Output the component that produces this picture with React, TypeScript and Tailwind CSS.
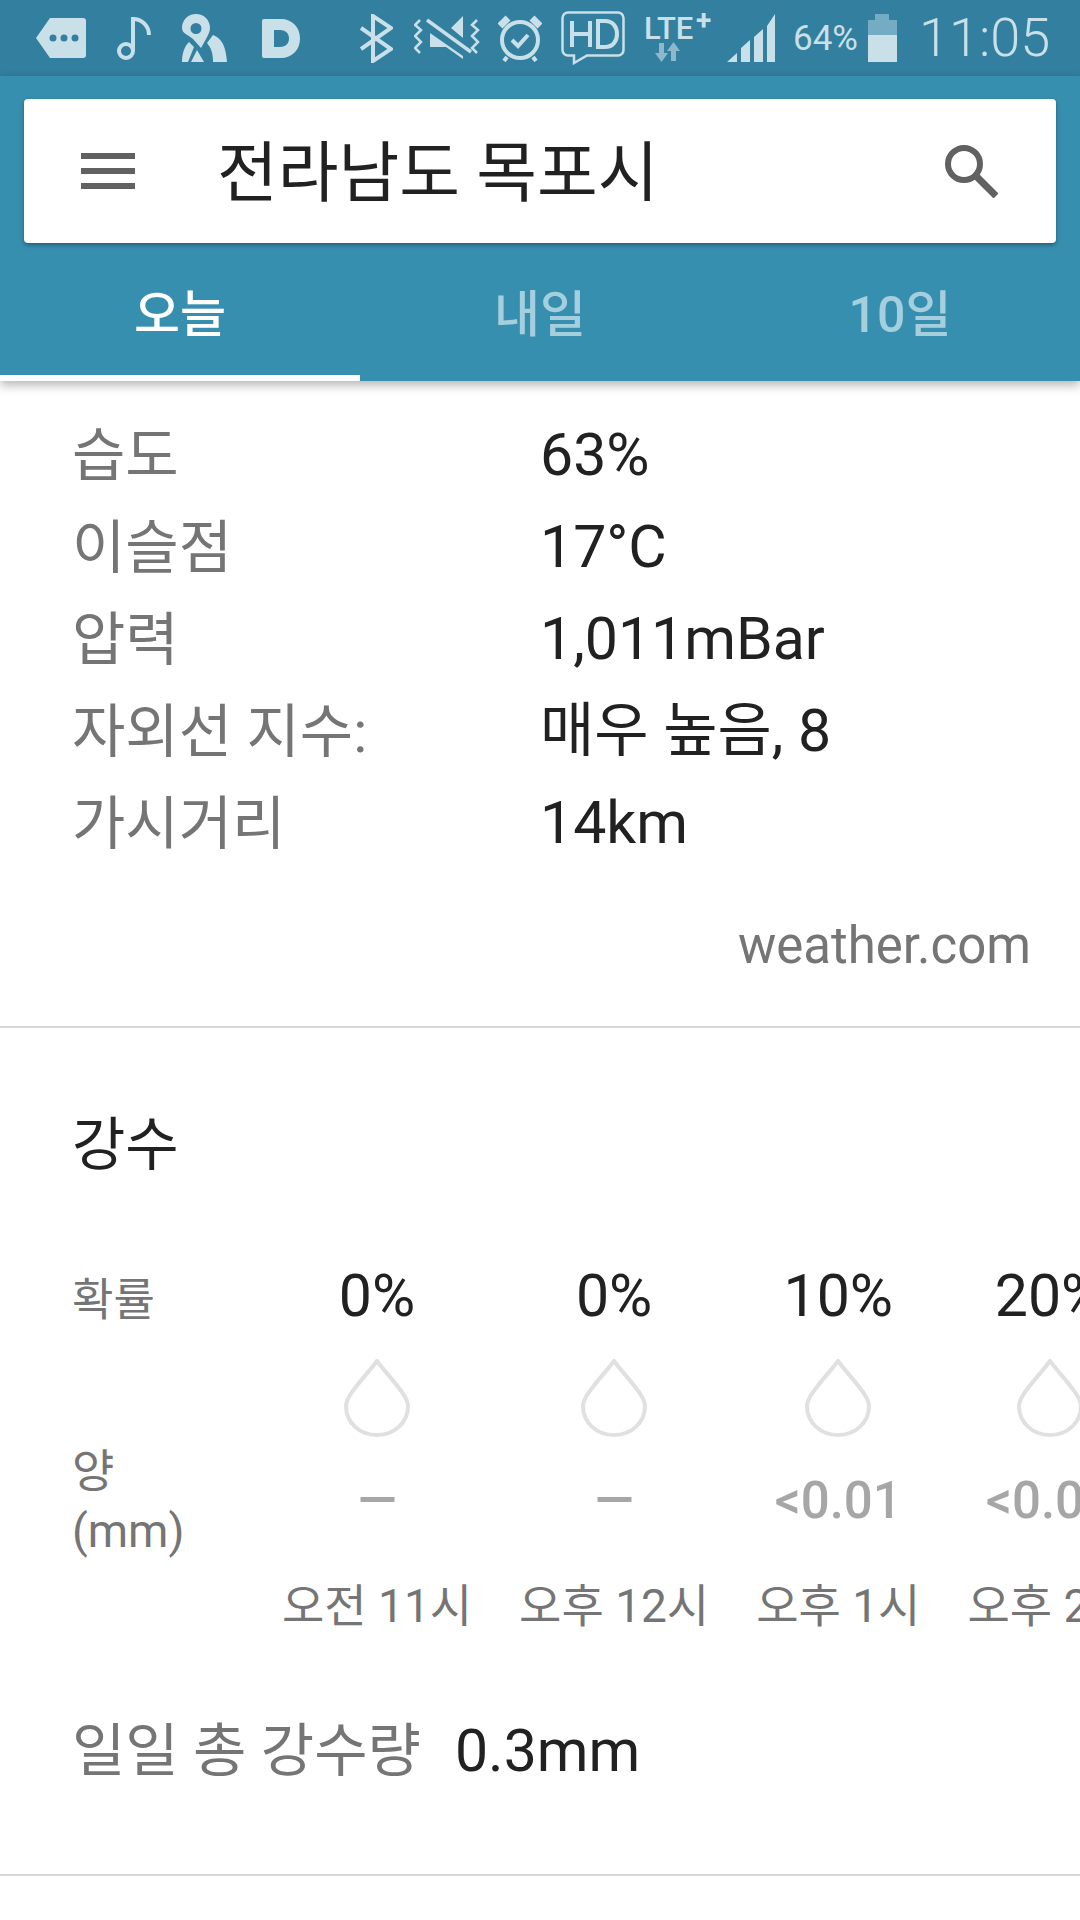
const font = { fontFamily: '"Roboto", "Noto Sans CJK KR", sans-serif' };

const details = [
  ['습도', '63%'],
  ['이슬점', '17°C'],
  ['압력', '1,011mBar'],
  ['자외선 지수:', '매우 높음, 8'],
  ['가시거리', '14km'],
];

const hours = [
  { pct: '0%', amount: '—', time: '오전 11시' },
  { pct: '0%', amount: '—', time: '오후 12시' },
  { pct: '10%', amount: '<0.01', time: '오후 1시' },
  { pct: '20%', amount: '<0.01', time: '오후 2시' },
];

function Drop() {
  return (
    <svg width="66" height="78" viewBox="0 0 66 78" fill="none" stroke="#e0e0e0" strokeWidth="4">
      <path d="M33 2C22 17 2 36 2 47c0 17 14 29 31 29s31-12 31-29C64 36 44 17 33 2Z" />
    </svg>
  );
}

function StatusIcons() {
  const c = '#c9e0e8';
  return (
    <div className="flex h-[76px] items-center bg-[#337f9f] text-[#c9e0e8]">
      <svg className="ml-[36px]" width="50" height="40" viewBox="0 0 50 40">
        <path d="M14 0h33a3 3 0 0 1 3 3v34a3 3 0 0 1-3 3H14L0 20Z" fill={c} />
        <circle cx="17" cy="20" r="3.5" fill="#337f9f" />
        <circle cx="28" cy="20" r="3.5" fill="#337f9f" />
        <circle cx="39" cy="20" r="3.5" fill="#337f9f" />
      </svg>
      <svg className="ml-[31px]" width="34" height="44" viewBox="0 0 34 44" fill="none" stroke={c} strokeWidth="4">
        <circle cx="9" cy="35" r="7" />
        <path d="M16 35V3c9 0 16 7 16 16" />
      </svg>
      <svg className="ml-[31px]" width="45" height="48" viewBox="0 0 45 48" fill={c}>
        <path fillRule="evenodd" d="M14 0c8 0 14 6 14 14 0 4-2 7-4 11l-5 9-8-9C7 21 0 20 0 14 0 6 6 0 14 0Zm0 9a5.500 5.500 0 1 0 0 11 5.500 5.500 0 0 0 0-11Z" />
        <path d="M31 21c9 3 13 12 14 27H31c0-9-2-14-6-19ZM7 28l5 5-6 15H0c0-8 2-15 7-20ZM15 36l7 12H9Z" />
      </svg>
      <svg className="ml-[35px]" width="38" height="39" viewBox="0 0 38 39" fill={c}>
        <path fillRule="evenodd" d="M2 0h17c11 0 19 8 19 19.500S30 39 19 39H2a2 2 0 0 1-2-2V2a2 2 0 0 1 2-2Zm10 11v17h6c6 0 9-4 9-8.500S24 11 18 11Z" />
      </svg>
      <svg className="ml-[60px]" width="33" height="49" viewBox="0 0 33 49" fill="none" stroke={c} strokeWidth="4">
        <path d="M1 14 31 35 13 47V2l18 12L1 35" />
      </svg>
      <svg className="ml-[21px]" width="69" height="44" viewBox="0 0 69 44" fill="none" stroke={c} strokeWidth="2.500">
        <path d="M6 4 1 9l6 5-6 6 6 6-6 6 5 5" />
        <path d="M63 4l-5 5 6 5-6 6 6 6-6 6 5 5" />
        <path d="M13 4 57 36" strokeWidth="3.500" />
        <path d="M37 12 49 0v22ZM16 17l33 23v3L32 31H16Z" fill={c} stroke="none" />
      </svg>
      <svg className="ml-[15px]" width="44" height="48" viewBox="0 0 44 48" fill="none" stroke={c} strokeWidth="4">
        <circle cx="22" cy="26" r="18" />
        <path d="M14 26l6 6 10-11" />
        <path d="M2 12 10 4M42 12l-8-8" strokeWidth="7" />
        <path d="M9 43l-3 4M35 43l3 4" />
      </svg>
      <svg className="ml-[19px]" width="64" height="54" viewBox="0 0 64 54" fill="none" stroke={c}>
        <path d="M7 1.500h50a5.500 5.500 0 0 1 5.500 5.500v32a5.500 5.500 0 0 1-5.500 5.500H26L13 52v-7.500H7A5.500 5.500 0 0 1 1.500 39V7A5.500 5.500 0 0 1 7 1.500Z" strokeWidth="2.500" />
        <path d="M11 10v26M29 10v26M11 23h18" strokeWidth="4" />
        <path d="M37 10v26h7c8 0 12-6 12-13s-4-13-12-13Z" strokeWidth="4" />
      </svg>
      <div className="relative ml-[19px] h-[54px] w-[71px]">
        <span className="text-[31px] leading-[36px] font-medium">LTE</span>
        <span className="absolute top-[-8px] left-[52px] text-[28px] leading-[36px] font-bold">+</span>
        <svg className="absolute top-[30px] left-[11px] opacity-60" width="26" height="22" viewBox="0 0 26 22" fill={c}>
          <path d="M4 2h5v10h4l-6.500 9L0 12h4ZM16 20h5V10h4L18.500 1 12 10h4Z" />
        </svg>
      </div>
      <svg className="ml-[12px]" width="48" height="48" viewBox="0 0 48 48" fill={c}>
        <path d="M0 48 10 39V48ZM14 48V34l9-8v22ZM27 48V23l9-8v33ZM40 48V12l8-12v48Z" />
      </svg>
      <span className="ml-[18px] text-[35px] leading-none">64%</span>
      <div className="ml-[10px] flex h-[48px] w-[29px] flex-col items-center">
        <div className="h-[6px] w-[14px] bg-[#74adc3]" />
        <div className="h-[15px] w-full bg-[#74adc3]" />
        <div className="h-[27px] w-full bg-[#c9e0e8]" />
      </div>
      <span className="ml-[22px] text-[54px] leading-none font-light">11:05</span>
    </div>
  );
}

export default function App() {
  return (
    <div className="h-[1920px] w-[1080px] overflow-hidden bg-white" style={font}>
      <StatusIcons />

      {/* Header */}
      <div className="relative z-10 bg-[#378fb0] shadow-[0_4px_10px_rgba(0,0,0,0.3)]">
        <div className="px-[24px] pt-[23px]">
          <div className="flex h-[144px] items-center rounded-[4px] bg-white shadow-[0_2px_4px_rgba(0,0,0,0.35)]">
            <div className="ml-[57px] flex w-[54px] flex-col gap-[9px]">
              <div className="h-[6px] bg-[#616161]" />
              <div className="h-[6px] bg-[#616161]" />
              <div className="h-[6px] bg-[#616161]" />
            </div>
            <span className="ml-[82px] pt-[5px] text-[66px] leading-none text-[#212121]">전라남도 목포시</span>
            <svg className="mr-[58px] ml-auto" width="54" height="54" viewBox="0 0 54 54" fill="none" stroke="#616161">
              <circle cx="20" cy="20" r="16" strokeWidth="6" />
              <path d="M32 32 52 52" strokeWidth="7" />
            </svg>
          </div>
        </div>
        <div className="grid h-[138px] grid-cols-3">
          <div className="flex items-center justify-center border-b-[6px] border-white pt-[12px] text-[50px] font-medium text-white">오늘</div>
          <div className="flex items-center justify-center pt-[6px] text-[50px] font-medium text-[#a5cfdd]">내일</div>
          <div className="flex items-center justify-center pt-[6px] text-[50px] font-medium text-[#a5cfdd]">10일</div>
        </div>
      </div>

      {/* Details */}
      <div className="pt-[28px]">
        {details.map(([label, value]) => (
          <div key={label} className="flex h-[92px] items-center pl-[72px]">
            <span className="w-[468px] pt-[3px] text-[58px] text-[#757575]">{label}</span>
            <span className="text-[59px] text-[#212121]">{value}</span>
          </div>
        ))}
        <div className="mt-[47px] h-[60px] pr-[49px] text-right text-[51px] leading-[60px] text-[#757575]">weather.com</div>
      </div>

      <div className="mt-[50px] border-t-2 border-[#d6d6d6]" />

      {/* Precipitation */}
      <div className="pt-[82px]">
        <div className="h-[70px] pl-[72px] text-[58px] leading-[70px] text-[#212121]">강수</div>
        <div className="mt-[76px] flex">
          <div className="w-[282px] shrink-0 pl-[72px] text-[#757575]">
            <div className="h-[86px] pt-[15px] text-[45px] leading-[60px]">확률</div>
            <div className="mt-[99px] text-[46px] leading-[60px]">양<br />(mm)</div>
          </div>
          <div className="flex gap-[47px]">
            {hours.map((h) => (
              <div key={h.time} className="flex shrink-0 flex-col items-center">
                <div className="h-[80px] text-[59px] leading-[80px] text-[#212121]">{h.pct}</div>
                <div className="mt-[23px]"><Drop /></div>
                <div className="mt-[24px] h-[80px] text-[51px] leading-[80px] font-medium text-[#a6a6a6]">{h.amount}</div>
                <div className="mt-[34px] h-[62px] text-[46px] leading-[62px] text-[#757575]">{h.time}</div>
              </div>
            ))}
          </div>
        </div>
        <div className="mt-[74px] flex h-[80px] items-center pl-[72px]">
          <span className="text-[58px] text-[#757575]">일일 총 강수량</span>
          <span className="ml-[34px] text-[59px] text-[#212121]">0.3mm</span>
        </div>
      </div>

      <div className="mt-[83px] border-t-2 border-[#d6d6d6]" />
    </div>
  );
}
